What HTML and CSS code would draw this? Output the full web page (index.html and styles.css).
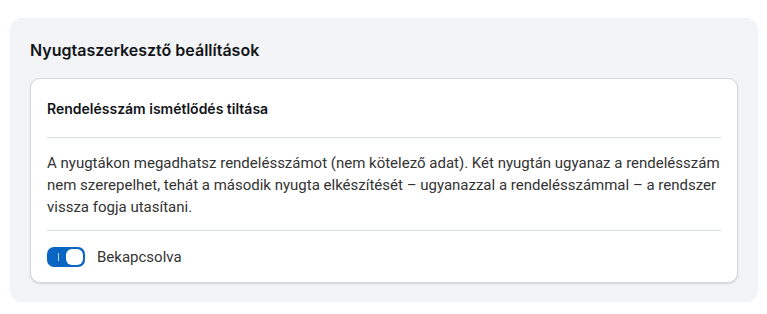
FILE: index.html
```html
<!DOCTYPE html>
<html lang="hu">
<head>
<meta charset="utf-8">
<title>Nyugtaszerkesztő beállítások</title>
<link rel="stylesheet" href="styles.css">
</head>
<body>
<section class="panel">
  <h2 class="panel-title">Nyugtaszerkesztő beállítások</h2>
  <div class="card">
    <div class="card-head">
      <h3 class="card-title">Rendelésszám ismétlődés tiltása</h3>
    </div>
    <div class="card-body">
      <p class="desc">A nyugtákon megadhatsz rendelésszámot (nem kötelező adat). Két nyugtán ugyanaz a rendelésszám nem szerepelhet, tehát a második nyugta elkészítését – ugyanazzal a rendelésszámmal – a rendszer vissza fogja utasítani.</p>
    </div>
    <div class="card-foot">
      <label class="switch-row">
        <span class="switch on"><span class="switch-mark"></span><span class="switch-knob"></span></span>
        <span class="switch-label">Bekapcsolva</span>
      </label>
    </div>
  </div>
</section>
</body>
</html>
```
FILE: styles.css
```css
* { box-sizing: border-box; }
html, body { background: #ffffff; }
body {
  margin: 0;
  padding: 18px 9px 11px 10px;
  font-family: Roboto, "Liberation Sans", Arial, sans-serif;
}
.panel {
  background: #f3f4f6;
  border-radius: 12px;
  padding: 20px 20px 19px 20px;
}
.panel-title {
  margin: 0 0 16px 0;
  font-family: Inter, "Noto Sans", sans-serif;
  font-size: 16px;
  line-height: 24px;
  font-weight: 600;
  color: #111418;
}
.card {
  background: #ffffff;
  border: 1px solid #d3d9de;
  border-radius: 10px;
  box-shadow: 0 1px 2px rgba(0, 0, 0, 0.14);
  padding: 0 16px;
}
.card-head {
  padding: 20px 0 18px 0;
  border-bottom: 1px solid #d8dde2;
}
.card-title {
  margin: 0;
  font-family: Inter, "Noto Sans", sans-serif;
  font-size: 14px;
  line-height: 20px;
  font-weight: 600;
  color: #111418;
}
.card-body {
  padding: 14px 0 12px 0;
  border-bottom: 1px solid #d8dde2;
}
.desc {
  margin: 0;
  font-size: 15px;
  line-height: 22px;
  color: #333333;
}
.card-foot {
  padding: 16px 0 15px 0;
}
.switch-row {
  display: flex;
  align-items: center;
  gap: 12px;
}
.switch {
  position: relative;
  width: 38px;
  height: 20px;
  border-radius: 7px;
  background: #0b65c2;
  display: flex;
  align-items: center;
  justify-content: flex-end;
  padding: 2px;
}
.switch-mark {
  position: absolute;
  left: 11px;
  top: 6px;
  width: 1px;
  height: 8px;
  background: #bcd6f2;
}
.switch-knob {
  width: 17px;
  height: 16px;
  border-radius: 6px;
  background: #ffffff;
}
.switch-label {
  font-size: 15px;
  line-height: 20px;
  color: #333333;
}
```
